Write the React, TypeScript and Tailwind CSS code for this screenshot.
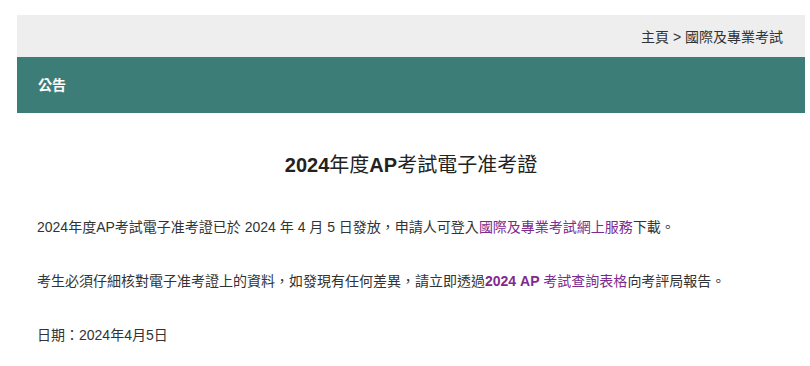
import React from "react";

export default function App() {
  const font = { fontFamily: '"Liberation Sans", Arial, "Noto Sans CJK TC", sans-serif' };
  return (
    <div className="w-[810px] h-[366px] bg-white pt-[15px] px-[17px] overflow-hidden" style={font}>
      <div className="w-[788px]">
        <div className="h-[42px] bg-[#eeeeee] flex items-center justify-end pr-[22px] pt-[2px] text-[14px] text-[#333333]">
          主頁 &gt; 國際及專業考試
        </div>
        <div className="h-[56px] bg-[#3d7d78] flex items-center pl-[21px] text-[14px] font-bold text-white">
          公告
        </div>
        <div className="px-[20px] text-[14px] text-[#333333]">
          <h1 className="text-center text-[20px] text-[#222222] mt-[39px] leading-[26px]">
            <b>2024</b>年度<b>AP</b>考試電子准考證
          </h1>
          <p className="mt-[39px] leading-[20px]">
            2024年度AP考試電子准考證已於 2024 年 4 月 5 日發放，申請人可登入
            <a className="text-[#7e2a8e]">國際及專業考試網上服務</a>下載。
          </p>
          <p className="mt-[34px] leading-[20px]">
            考生必須仔細核對電子准考證上的資料，如發現有任何差異，請立即透過
            <a className="text-[#7e2a8e]"><b>2024 AP</b> 考試查詢表格</a>向考評局報告。
          </p>
          <p className="mt-[34px] leading-[20px]">日期：2024年4月5日</p>
        </div>
      </div>
    </div>
  );
}
